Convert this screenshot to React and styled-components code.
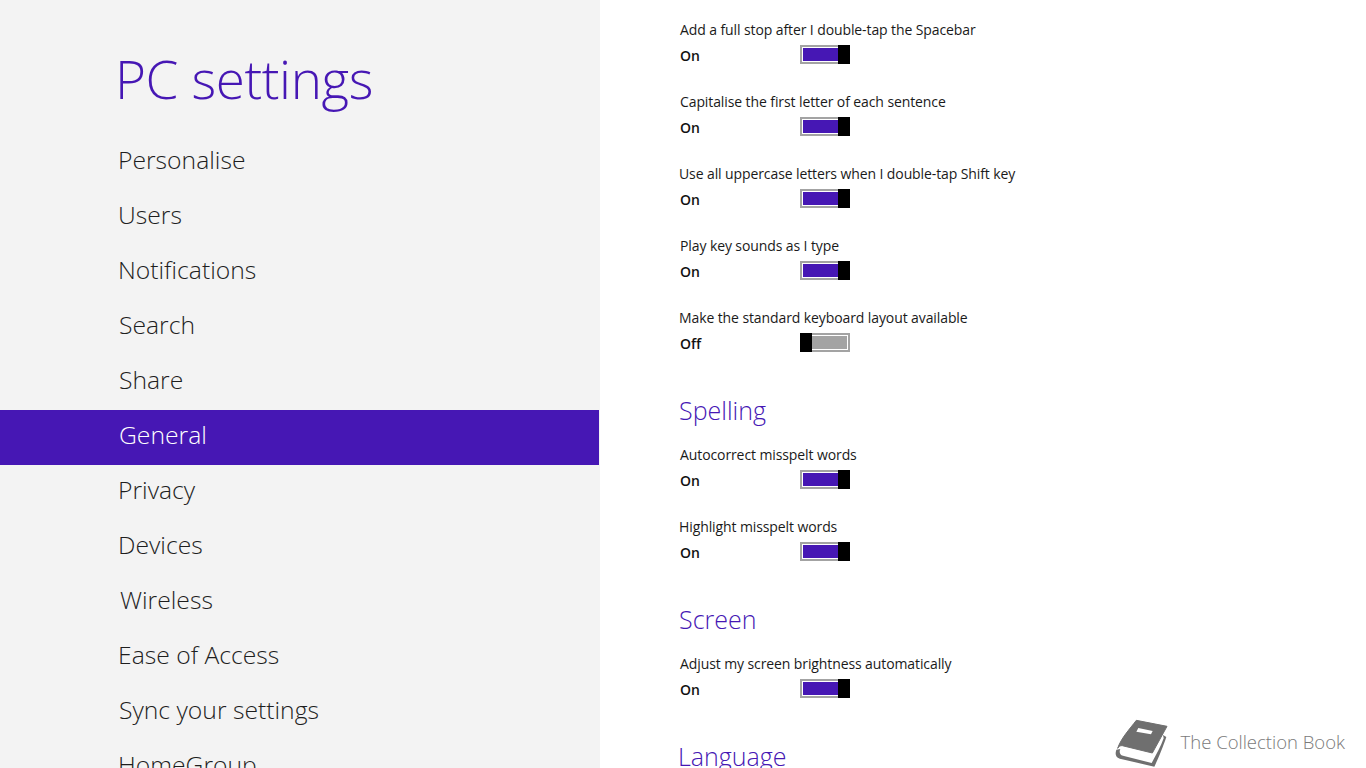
import React from 'react'
import styled, { createGlobalStyle } from 'styled-components'

const GlobalStyle = createGlobalStyle`
    html, body {
        margin: 0;
        padding: 0;
        height: 100%;
        overflow: hidden;
        background: #ffffff;
        font-family: "Open Sans", "Noto Sans", "Liberation Sans", sans-serif;
    }
    #root {
        height: 100%;
    }
`

const Page = styled.div`
    position: relative;
    display: flex;
    width: 1366px;
    height: 768px;
    overflow: hidden;
`

const Sidebar = styled.nav`
    flex: 0 0 600px;
    height: 768px;
    background: #f3f3f3;
    overflow: hidden;
`

const Title = styled.h1`
    margin: 0;
    height: 135px;
    padding: 44px 0 0 115px;
    box-sizing: border-box;
    color: #4617b4;
    font-size: 53px;
    font-weight: 300;
    line-height: 70px;
    letter-spacing: -0.4px;
`

const MenuItem = styled.div`
    display: flex;
    align-items: center;
    width: 599px;
    height: 55px;
    box-sizing: border-box;
    padding-left: ${p => p.$indent || 118}px;
    padding-bottom: 6px;
    font-size: 24.7px;
    font-weight: 300;
    color: ${p => (p.$active ? '#ffffff' : '#1e1e1e')};
    background: ${p => (p.$active ? '#4617b4' : 'transparent')};
`

const Content = styled.main`
    flex: 1;
    padding: 19px 0 0 679px;
    margin-left: -600px;
`

const SettingRow = styled.div`
    height: 72px;
`

const SettingLabel = styled.div`
    height: 22px;
    line-height: 22px;
    padding-left: ${p => p.$indent || 0}px;
    font-size: 14px;
    font-weight: 400;
    letter-spacing: -0.1px;
    color: #1a1a1a;
`

const ControlRow = styled.div`
    display: flex;
    align-items: flex-start;
    margin-top: 4px;
    height: 20px;
    padding-left: 1px;
`

const StateText = styled.span`
    width: 120px;
    line-height: 20px;
    padding-top: 1px;
    font-size: 14px;
    font-weight: 600;
    color: #111111;
`

const Toggle = styled.div`
    display: flex;
    flex-direction: ${p => (p.$on ? 'row' : 'row-reverse')};
    width: 50px;
    height: 19px;
`

const Track = styled.div`
    flex: 1;
    box-sizing: border-box;
    border: 2px solid #a3a3a3;
    ${p => (p.$on ? 'border-right: none;' : 'border-left: none;')}
    box-shadow: inset 0 1px #ffffff, inset 0 -1px #ffffff, inset ${p => (p.$on ? '1px' : '-1px')} 0 #ffffff;
    background: ${p => (p.$on ? '#4617b4' : '#a3a3a3')};
`

const Thumb = styled.div`
    flex: 0 0 12px;
    background: #000000;
`

const SectionHeading = styled.h2`
    margin: 0;
    height: 65px;
    padding-top: 13px;
    box-sizing: border-box;
    margin-left: ${p => p.$indent || 0}px;
    color: #4617b4;
    font-size: 25px;
    font-weight: 300;
    line-height: 36px;
`

const Watermark = styled.div`
    position: absolute;
    right: 21px;
    bottom: 1px;
    display: flex;
    align-items: center;
    gap: 13px;
    font-size: 18.5px;
    font-weight: 300;
    color: #7a7a7a;
`

const WatermarkText = styled.span`
    padding-bottom: 4px;
`

const menu = [
    { name: 'Personalise' },
    { name: 'Users' },
    { name: 'Notifications' },
    { name: 'Search', indent: 119 },
    { name: 'Share', indent: 119 },
    { name: 'General', indent: 119, active: true },
    { name: 'Privacy' },
    { name: 'Devices' },
    { name: 'Wireless', indent: 120 },
    { name: 'Ease of Access' },
    { name: 'Sync your settings', indent: 119 },
    { name: 'HomeGroup' },
]

const sections = [
    {
        rows: [
            { label: 'Add a full stop after I double-tap the Spacebar', on: true, indent: 1 },
            { label: 'Capitalise the first letter of each sentence', on: true, indent: 1 },
            { label: 'Use all uppercase letters when I double-tap Shift key', on: true },
            { label: 'Play key sounds as I type', on: true, indent: 1 },
            { label: 'Make the standard keyboard layout available', on: false },
        ],
    },
    {
        heading: 'Spelling',
        rows: [
            { label: 'Autocorrect misspelt words', on: true, indent: 1 },
            { label: 'Highlight misspelt words', on: true },
        ],
    },
    {
        heading: 'Screen',
        rows: [{ label: 'Adjust my screen brightness automatically', on: true, indent: 1 }],
    },
    { heading: 'Language', indent: -1, rows: [] },
]

function BookIcon() {
    return (
        <svg width="53" height="48" viewBox="12 8 159 144">
            <path
                fill="#6f6f6f"
                stroke="#6f6f6f"
                strokeWidth="3"
                strokeLinejoin="round"
                d="M76 12 L168 30 L124 110 L34 88 C28 87 24 90 20 96 C30 66 56 38 76 12 Z"
            />
            <path fill="#ffffff" d="M82 35 L125 44 L120 54 L76 46 Z" />
            <path
                fill="#6f6f6f"
                d="M16 100 C10 118 18 126 30 128 L130 151 C140 130 155 95 166 62 L156 56 L158 66 C150 90 135 115 122 140 L36 118 C26 116 24 106 28 98 Z"
            />
        </svg>
    )
}

function Setting({ label, on, indent }) {
    return (
        <SettingRow>
            <SettingLabel $indent={indent}>{label}</SettingLabel>
            <ControlRow>
                <StateText>{on ? 'On' : 'Off'}</StateText>
                <Toggle $on={on}>
                    <Track $on={on} />
                    <Thumb />
                </Toggle>
            </ControlRow>
        </SettingRow>
    )
}

export default function App() {
    return (
        <Page>
            <GlobalStyle />
            <Sidebar>
                <Title>PC settings</Title>
                {menu.map(item => (
                    <MenuItem key={item.name} $active={item.active} $indent={item.indent}>
                        {item.name}
                    </MenuItem>
                ))}
            </Sidebar>
            <Content>
                {sections.map((section, index) => (
                    <div key={index}>
                        {section.heading && <SectionHeading $indent={section.indent}>{section.heading}</SectionHeading>}
                        {section.rows.map(row => (
                            <Setting key={row.label} label={row.label} on={row.on} indent={row.indent} />
                        ))}
                    </div>
                ))}
            </Content>
            <Watermark>
                <BookIcon />
                <WatermarkText>The Collection Book</WatermarkText>
            </Watermark>
        </Page>
    )
}
